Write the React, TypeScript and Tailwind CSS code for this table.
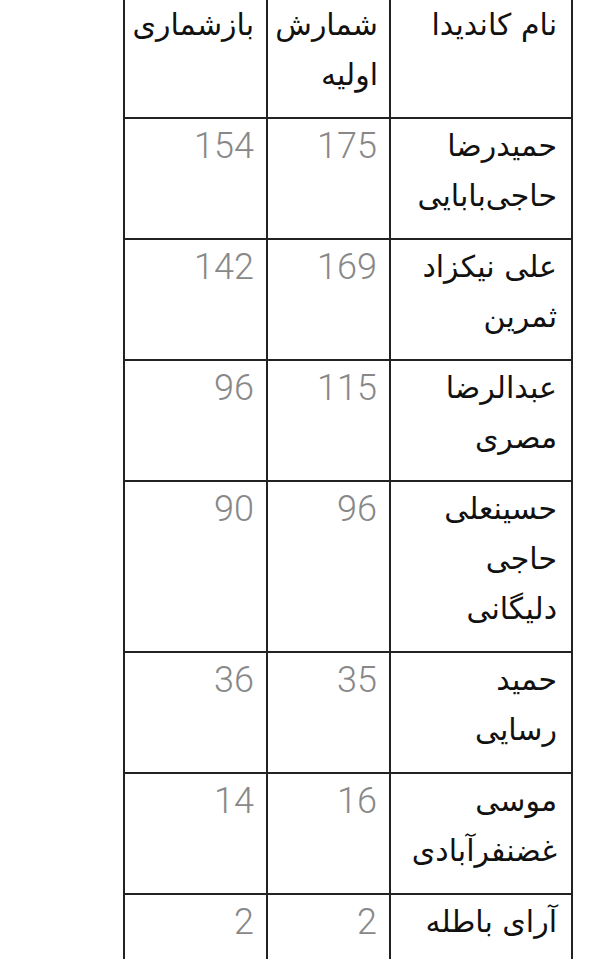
const rows = [
  { name: ["حمیدرضا", "حاجی‌بابایی"], first: "175", recount: "154" },
  { name: ["علی نیکزاد", "ثمرین"], first: "169", recount: "142" },
  { name: ["عبدالرضا", "مصری"], first: "115", recount: "96" },
  { name: ["حسینعلی", "حاجی", "دلیگانی"], first: "96", recount: "90" },
  { name: ["حمید", "رسایی"], first: "35", recount: "36" },
  { name: ["موسی", "غضنفرآبادی"], first: "16", recount: "14" },
  { name: ["آرای باطله"], first: "2", recount: "2" },
];

const fa = { fontFamily: '"DejaVu Sans", "Noto Sans", sans-serif' };
const num = { fontFamily: "Roboto, sans-serif" };

export default function App() {
  return (
    <div className="w-[600px] h-[959px] overflow-hidden bg-white">
      <table dir="rtl" className="ml-[123px] -mt-[4px] w-[448px] border-collapse table-fixed">
        <colgroup>
          <col className="w-[182px]" />
          <col className="w-[123px]" />
          <col className="w-[143px]" />
        </colgroup>
        <thead>
          {/* header row */}
          <tr className="text-[30px] leading-[50px] text-[#111]" style={fa}>
            <th className="border-2 border-[#222] align-top text-right font-normal pt-[2px] pb-[17px] pr-[14px]">
              نام کاندیدا
            </th>
            <th className="border-2 border-[#222] align-top text-right font-normal pt-[2px] pb-[17px] pr-[11px]">
              شمارش
              <br />
              اولیه
            </th>
            <th className="border-2 border-[#222] align-top text-right font-normal pt-[2px] pb-[17px] pr-[12px]">
              بازشماری
            </th>
          </tr>
        </thead>
        <tbody>
          {rows.map((r) => (
            <tr key={r.first + r.recount + r.name[0]} className="leading-[50px]">
              <td className="border-2 border-[#222] align-top text-right text-[30px] text-[#111] pt-[2px] pb-[17px] pr-[14px]" style={fa}>
                {r.name.map((l) => (
                  <div key={l}>{l}</div>
                ))}
              </td>
              <td className="border-2 border-[#222] align-top text-right text-[36px] font-light text-[#888] pt-[2px] pb-[17px] pr-[12px]" style={num}>
                {r.first}
              </td>
              <td className="border-2 border-[#222] align-top text-right text-[36px] font-light text-[#888] pt-[2px] pb-[17px] pr-[12px]" style={num}>
                {r.recount}
              </td>
            </tr>
          ))}
        </tbody>
      </table>
    </div>
  );
}
